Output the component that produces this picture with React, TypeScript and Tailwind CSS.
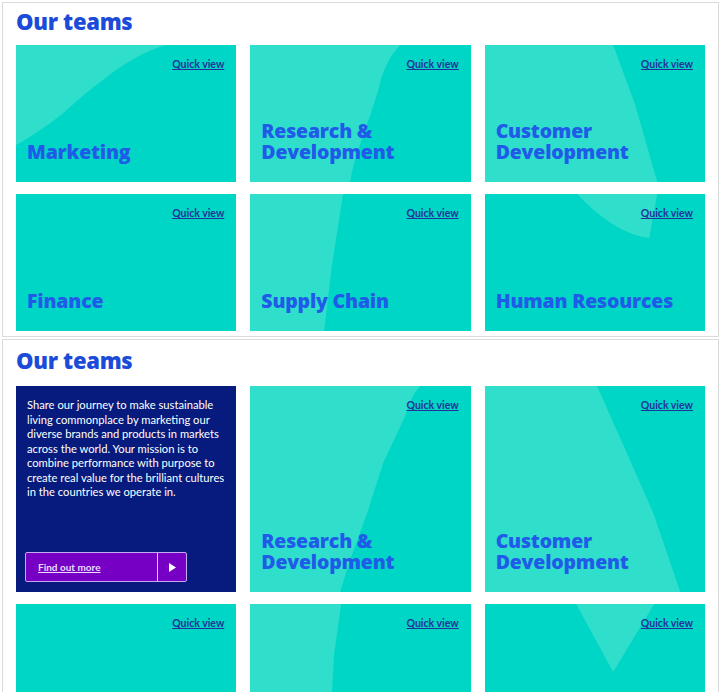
import React from 'react';

interface Team {
  title: string[];
  shape?: string; // lighter shape drawn over the teal card
}

const teamsTop: Team[] = [
  { title: ['Marketing'], shape: 'M0 0 H150 C120 8 90 30 45 70 C25 85 10 95 0 100 Z' },
  { title: ['Research &', 'Development'], shape: 'M0 0 H150 C138 12 132 28 128 45 C118 80 104 110 100 137 H0 Z' },
  { title: ['Customer', 'Development'], shape: 'M0 0 H128 L150 60 L172 137 H0 Z' },
  { title: ['Finance'] },
  { title: ['Supply Chain'], shape: 'M0 0 H93 L82 70 L74 137 H0 Z' },
  { title: ['Human Resources'], shape: 'M92 0 H172 L164 44 C145 42 120 30 92 0 Z' },
];

const teamsBottom: Team[] = [
  { title: ['Research &', 'Development'], shape: 'M0 0 H170 C162 8 158 20 155 30 L133 77 L117 127 L100 174 L90 206 H0 Z' },
  { title: ['Customer', 'Development'], shape: 'M0 0 H112 L168 127 L195 206 H0 Z' },
  { title: [] },
  { title: [], shape: 'M0 0 H91 L84 50 L79 137 H0 Z' },
  { title: [], shape: 'M91 0 H169 L128 68 Z' },
];

const TeamCard: React.FC<{ team: Team; tall?: boolean }> = ({ team, tall }) => {
  const h = tall ? 206 : 137;
  return (
    <div className={`relative overflow-hidden bg-[#00d6c5] ${tall ? 'h-[206px]' : 'h-[137px]'}`}>
      {team.shape && (
        <svg className="absolute inset-0 h-full w-full" viewBox={`0 0 220 ${h}`} preserveAspectRatio="none">
          <path d={team.shape} fill="#2fdecb" />
        </svg>
      )}
      <a
        href="#"
        className="absolute right-[12px] top-[13px] font-['Lato',sans-serif] text-[10.5px] font-bold leading-3 text-[#22329a] underline"
      >
        Quick view
      </a>
      {team.title.length > 0 && (
        <h3 className="absolute bottom-[20px] left-[11px] font-['Open_Sans',sans-serif] text-[19.5px] font-extrabold leading-[21px] tracking-[-0.2px] text-[#1f5be8]">
          {team.title.map((line) => (
            <span key={line} className="block">{line}</span>
          ))}
        </h3>
      )}
    </div>
  );
};

const IntroCard: React.FC = () => (
  <div className="flex h-[206px] flex-col justify-between bg-[#061b7d] pb-[10px] pl-[11px] pr-[11px] pt-[12px]">
    <p className="text-[11.2px] leading-[14.5px] text-white">
      Share our journey to make sustainable living commonplace by marketing our diverse brands and products in markets
      across the world. Your mission is to combine performance with purpose to create real value for the brilliant
      cultures in the countries we operate in.
    </p>
    <a
      href="#"
      className="-ml-[2px] flex h-[30px] w-[162px] items-stretch rounded-[2px] border border-[#c7a9f2] bg-[#7600c4]"
    >
      <span className="flex flex-1 items-center pl-[12px] text-[10px] font-bold text-[#eadcff] underline">Find out more</span>
      <span className="flex w-[29px] items-center justify-center border-l border-[#e0ccff]">
        <svg width="7" height="9" viewBox="0 0 7 9">
          <path d="M0 0 L7 4.5 L0 9 Z" fill="#ffffff" />
        </svg>
      </span>
    </a>
  </div>
);

const Heading: React.FC = () => (
  <h2 className="font-['Open_Sans',sans-serif] text-[22px] font-extrabold leading-[28px] tracking-[-0.3px] text-[#1b4bd8]">
    Our teams
  </h2>
);

export default function App() {
  return (
    <div className="h-[692px] overflow-hidden bg-white pl-[2px] pr-[4px] pt-[2px] font-['Lato','Noto_Sans',sans-serif]">
      <section className="border border-[#dadada] px-[13px] pb-[5px] pt-[4px]">
        <Heading />
        <div className="mt-[10px] grid grid-cols-3 gap-x-[14px] gap-y-[12px]">
          {teamsTop.map((t, i) => (
            <TeamCard key={i} team={t} />
          ))}
        </div>
      </section>
      <section className="mt-[2px] border border-[#dadada] px-[13px] pb-[5px] pt-[6px]">
        <Heading />
        <div className="mt-[12px] grid grid-cols-3 gap-x-[14px] gap-y-[12px]">
          <IntroCard />
          {teamsBottom.map((t, i) => (
            <TeamCard key={i} team={t} tall={i < 2} />
          ))}
        </div>
      </section>
    </div>
  );
}
